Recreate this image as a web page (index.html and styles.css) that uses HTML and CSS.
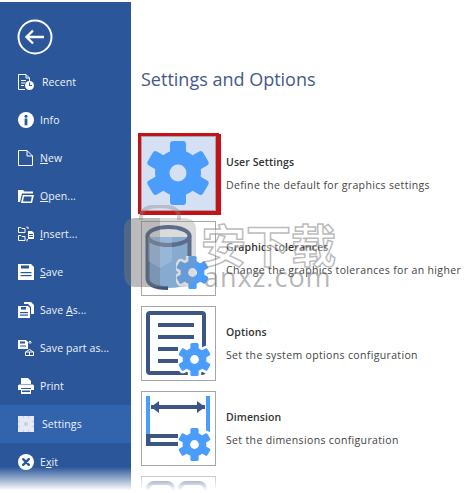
FILE: index.html
```html
<!DOCTYPE html>
<html>
<head>
<meta charset="UTF-8">
<title>Settings and Options</title>
<link rel="stylesheet" href="styles.css">
</head>
<body>
<svg class="defs" width="0" height="0">
<symbol id="gear" viewBox="0 0 64 64">
<rect x="24" y="0" width="16" height="64" rx="3"/>
<rect x="24" y="0" width="16" height="64" rx="3" transform="rotate(60 32 32)"/>
<rect x="24" y="0" width="16" height="64" rx="3" transform="rotate(120 32 32)"/>
<circle cx="32" cy="32" r="23"/>
<circle class="gear-hole" cx="32" cy="32" r="8.5"/>
</symbol>
</svg>
<div class="page">
<div class="sidebar">
<div class="back">
<svg width="36" height="36" viewBox="0 0 36 36" fill="none" stroke="#fff">
<circle cx="18" cy="18" r="16.5" stroke-width="2"/>
<path d="M27 18H10M16 11.5L9.5 18L16 24.5" stroke-width="2.4"/>
</svg>
</div>
<div class="nav">
<div class="nav-item nav-wide">
<svg class="nav-icon" viewBox="0 0 16 16"><path class="line" d="M.5.5H8L11.500 4V7M7 15.500H.5V.5M8 .5V4H11.500"/><path class="ic" d="M3 6h5v1H3zM3 8.500h4v1H3zM3 11h3v1H3z"/><circle class="ic" cx="11.500" cy="11.500" r="4.500"/><path class="cut" d="M11 8.500h1V11h2v1h-3Z"/></svg>
<span>Recent</span>
</div>
<div class="nav-item">
<svg class="nav-icon" viewBox="0 0 16 16"><circle class="ic" cx="8" cy="8" r="8"/><circle class="cut" cx="8" cy="4.200" r="1.500"/><rect class="cut" x="6.600" y="6.500" width="2.800" height="6.800"/></svg>
<span>Info</span>
</div>
<div class="nav-item">
<svg class="nav-icon" viewBox="0 0 16 16"><path class="line" d="M.5.5H9L14.500 6V15.500H.5ZM9 .5V6H14.500"/></svg>
<span><u>N</u>ew</span>
</div>
<div class="nav-item">
<svg class="nav-icon" viewBox="0 0 16 16"><path class="ic" d="M0 2H5L6.500 3.500H15V5.500H4L2 14H0Z"/><path class="ic" d="M4.800 7H16L14 15H3Z"/><path class="cut" d="M6 8.500H13.800L12.800 13.500H5Z"/></svg>
<span><u>O</u>pen...</span>
</div>
<div class="nav-item">
<svg class="nav-icon" viewBox="0 0 16 16"><path class="line" d="M.5 1.500H3L4 2.500H7V6.500H.5ZM.5 9.500H3L4 10.500H7V14.500H.5Z"/><path class="line" d="M9 .5V2H11M9 15.500V13.500H10"/><path class="ic" d="M10 5H14L16 7V13H10Z"/><path class="cut" d="M11 8h4v1h-4zM11 10h4v1h-4z"/></svg>
<span><u>I</u>nsert...</span>
</div>
<div class="nav-item">
<svg class="nav-icon" viewBox="0 0 16 16"><path class="ic" d="M0 0H13L16 3V16H0Z"/><rect class="cut" x="3" y="1.500" width="8" height="3"/><rect class="cut" x="2.500" y="8" width="11" height="1.200"/><rect class="cut" x="2.500" y="11" width="11" height="1.200"/></svg>
<span><u>S</u>ave</span>
</div>
<div class="nav-item">
<svg class="nav-icon" viewBox="0 0 16 16"><path class="ic" d="M0 4H10L12 6V16H0Z"/><rect class="cut" x="3" y="5" width="5" height="2.500"/><rect class="cut" x="2" y="10" width="8" height="1.200"/><rect class="cut" x="2" y="12.500" width="8" height="1.200"/><path class="ic" d="M6 0H13L16 3V12H13V5L10 2H6Z"/></svg>
<span>Save <u>A</u>s...</span>
</div>
<div class="nav-item">
<svg class="nav-icon" viewBox="0 0 16 16"><path class="ic" d="M0 0H8L10 2V9H0Z"/><rect class="cut" x="2" y="1.500" width="5" height="2"/><rect class="cut" x="2" y="5.500" width="6" height="1"/><path class="line" d="M12 1V4M10.500 2.500 12 1l1.500 1.500"/><path class="line" d="M7.500 12 11.500 9.500 15.500 12V15.500H7.500ZM7.500 12H15.500M11.500 12V15.500"/></svg>
<span>Save part as...</span>
</div>
<div class="nav-item">
<svg class="nav-icon" viewBox="0 0 16 16"><path class="ic" d="M3 0H10L13 3V6H3Z"/><path class="ic" d="M1.500 6.500H14.500Q16 6.500 16 8V12H13V10H3V12H0V8Q0 6.500 1.500 6.500Z"/><path class="ic" d="M3 11H13V16H3Z"/><rect class="cut" x="4" y="12.500" width="8" height="1.500"/></svg>
<span>Print</span>
</div>
<div class="nav-item nav-wide nav-active">
<svg class="nav-icon" viewBox="0 0 16 16"><rect x="0" y="0" width="16" height="16" fill="#e4e9f2"/><circle cx="8" cy="8" r="2" fill="#c3cfe3"/><path d="M0 5.500h2M14 5.500h2M0 10.500h2M14 10.500h2M5.500 0v2M10.500 0v2M5.500 14v2M10.500 14v2" stroke="#c3cfe3"/></svg>
<span>Settings</span>
</div>
<div class="nav-item">
<svg class="nav-icon" viewBox="0 0 16 16"><circle class="ic" cx="8" cy="8" r="8"/><path d="M5.200 5.200 10.800 10.800M10.800 5.200 5.200 10.800" stroke="#2b579a" stroke-width="2.400" stroke-linecap="round"/></svg>
<span>E<u>x</u>it</span>
</div>
</div>
</div>
<div class="main">
<h1 class="title">Settings and Options</h1>
<div class="list">
<div class="row row-selected">
<div class="tile">
<svg class="big-gear" width="64" height="64"><use href="#gear"/></svg>
</div>
<div class="row-text">
<div class="row-name">User Settings</div>
<div class="row-desc">Define the default for graphics settings</div>
</div>
</div>
<div class="row">
<div class="tile">
<svg class="tile-art" width="73" height="73" viewBox="0 0 73 73" fill="none">
<path d="M6.500 15V56Q6.500 66 26 66Q42 66 47 60V15" fill="#7fb4ee"/>
<ellipse cx="26.500" cy="14" rx="21" ry="9" stroke="#3d5585" stroke-width="4"/>
<path d="M5.500 14V56Q5.500 66 26 66" stroke="#3d5585" stroke-width="4"/>
<path d="M47.500 14V35" stroke="#3d5585" stroke-width="4"/>
<use class="gear-halo" href="#gear" x="34" y="34" width="33" height="33"/>
<use class="gear-small" href="#gear" x="34" y="34" width="33" height="33"/>
</svg>
</div>
<div class="row-text">
<div class="row-name">Graphics tolerances</div>
<div class="row-desc">Change the graphics tolerances for an higher</div>
</div>
</div>
<div class="row">
<div class="tile">
<svg class="tile-art" width="73" height="73" viewBox="0 0 73 73" fill="none">
<rect x="6" y="6" width="56" height="60" rx="2" stroke="#3d5585" stroke-width="4"/>
<path d="M16 18H52M16 30H52M16 42H36M16 54H36" stroke="#3d5585" stroke-width="4"/>
<use class="gear-halo" href="#gear" x="36" y="36" width="33" height="33"/>
<use class="gear-small" href="#gear" x="36" y="36" width="33" height="33"/>
</svg>
</div>
<div class="row-text">
<div class="row-name">Options</div>
<div class="row-desc">Set the system options configuration</div>
</div>
</div>
<div class="row">
<div class="tile">
<svg class="tile-art" width="73" height="73" viewBox="0 0 73 73" fill="none">
<path d="M6 4V42M66 4V40" stroke="#4a9dfb" stroke-width="4"/>
<path d="M9 15H63" stroke="#3d5585" stroke-width="4"/>
<path d="M9 15 17 9V21ZM63 15 55 9V21Z" fill="#3d5585"/>
<path d="M4 42H36V54H4ZM8.500 46V50H36V46Z" fill="#3d5585" fill-rule="evenodd"/>
<use class="gear-halo" href="#gear" x="36" y="36" width="33" height="33"/>
<use class="gear-small" href="#gear" x="36" y="36" width="33" height="33"/>
</svg>
</div>
<div class="row-text">
<div class="row-name">Dimension</div>
<div class="row-desc">Set the dimensions configuration</div>
</div>
</div>
<div class="row">
<div class="tile">
<svg class="tile-art" width="73" height="73" viewBox="0 0 73 73" fill="none">
<rect x="6" y="6" width="25" height="30" rx="6" stroke="#3d5585" stroke-width="4"/>
<rect x="38" y="6" width="25" height="30" rx="6" stroke="#3d5585" stroke-width="4"/>
</svg>
</div>
</div>
</div>
</div>
<div class="fade"></div>
<div class="mark">
<svg class="mark-shield" width="72" height="82" viewBox="0 0 72 82">
<path d="M17 15V12Q17 1 36 1Q55 1 55 12V15" fill="none" stroke="#8a8a8a" stroke-opacity=".4" stroke-width="4"/>
<path d="M12 13H36V82H12Q0 82 0 68V25Q0 13 12 13Z" fill="#777" fill-opacity=".5"/>
<path d="M36 13H60Q72 13 72 25V68Q72 82 60 82H36Z" fill="#999" fill-opacity=".35"/>
<path d="M24 32H48V56L36 63L24 56Z" fill="#fff" fill-opacity=".15"/>
</svg>
<div class="mark-text">
<div class="mark-cn">安下载</div>
<div class="mark-en">anxz.com</div>
</div>
</div>
</div>
</body>
</html>
```

FILE: styles.css
```css
*{box-sizing:border-box;}
html,body{margin:0;padding:0;background:#fff;}
body{font-family:"Open Sans","Noto Sans",sans-serif;}
.defs{position:absolute;}
.page{position:relative;display:flex;width:464px;height:493px;overflow:hidden;padding-top:2px;}

.sidebar{width:131px;flex:none;background-color:#2b579a;color:#eef2f9;}
.back{padding:17px 0 0 17px;height:61px;}
.back svg{display:block;}
.nav-item{display:flex;align-items:center;gap:6px;height:38px;padding-left:18px;font-size:10.500px;letter-spacing:.1px;}
.nav-wide{gap:8px;}
.nav-active{background-color:#3263ad;}
.nav-icon{width:16px;height:16px;flex:none;}
.ic{fill:#fff;}
.cut{fill:#2b579a;}
.line{fill:none;stroke:#fff;}
u{text-underline-offset:1px;}

.main{flex:1;padding-left:10px;min-width:0;}
.title{margin:65px 0 0;font-size:18px;line-height:24px;font-weight:400;color:#44598a;}
.list{display:flex;flex-direction:column;gap:10px;margin-top:45px;}
.row{display:flex;align-items:center;gap:10px;height:75px;flex:none;}
.tile{width:75px;height:75px;flex:none;border:1px solid #a6a6a6;background:#fff;--hole:#fff;}
.row-selected .tile{background:#d5e0f5;--hole:#d5e0f5;box-shadow:0 0 0 3px #c4121a,2px 1px 0 3px #c4121a;}
.big-gear{display:block;margin:4px 0 0 4px;fill:#4a9dfb;}
.tile-art{display:block;}
.gear-hole{fill:var(--hole);}
.gear-small{fill:#4a9dfb;}
.gear-halo{fill:#fff;stroke:#fff;stroke-width:10;}
.row-text{white-space:nowrap;color:#444;font-size:10.500px;letter-spacing:.35px;}
.row-name{font-weight:600;color:#333;height:23px;letter-spacing:.1px;}
.row-desc{height:15px;}

/* photo fade at the bottom edge */
.fade{position:absolute;left:0;right:0;bottom:0;height:26px;background:linear-gradient(rgba(255,255,255,0),#fff 90%);}

/* watermark over the list */
.mark{position:absolute;left:124px;top:205px;display:flex;gap:5px;}
.mark-shield{display:block;}
.mark-text{width:140px;}
.mark-cn{margin-top:9px;font-family:"Noto Sans CJK SC",sans-serif;font-size:45px;line-height:60px;font-weight:700;color:rgba(255,255,255,.45);-webkit-text-stroke:1.500px rgba(120,120,120,.5);white-space:nowrap;}
.mark-en{margin-top:-10px;padding-left:3px;font-size:27px;line-height:26px;color:rgba(110,110,110,.5);letter-spacing:1px;}
```
